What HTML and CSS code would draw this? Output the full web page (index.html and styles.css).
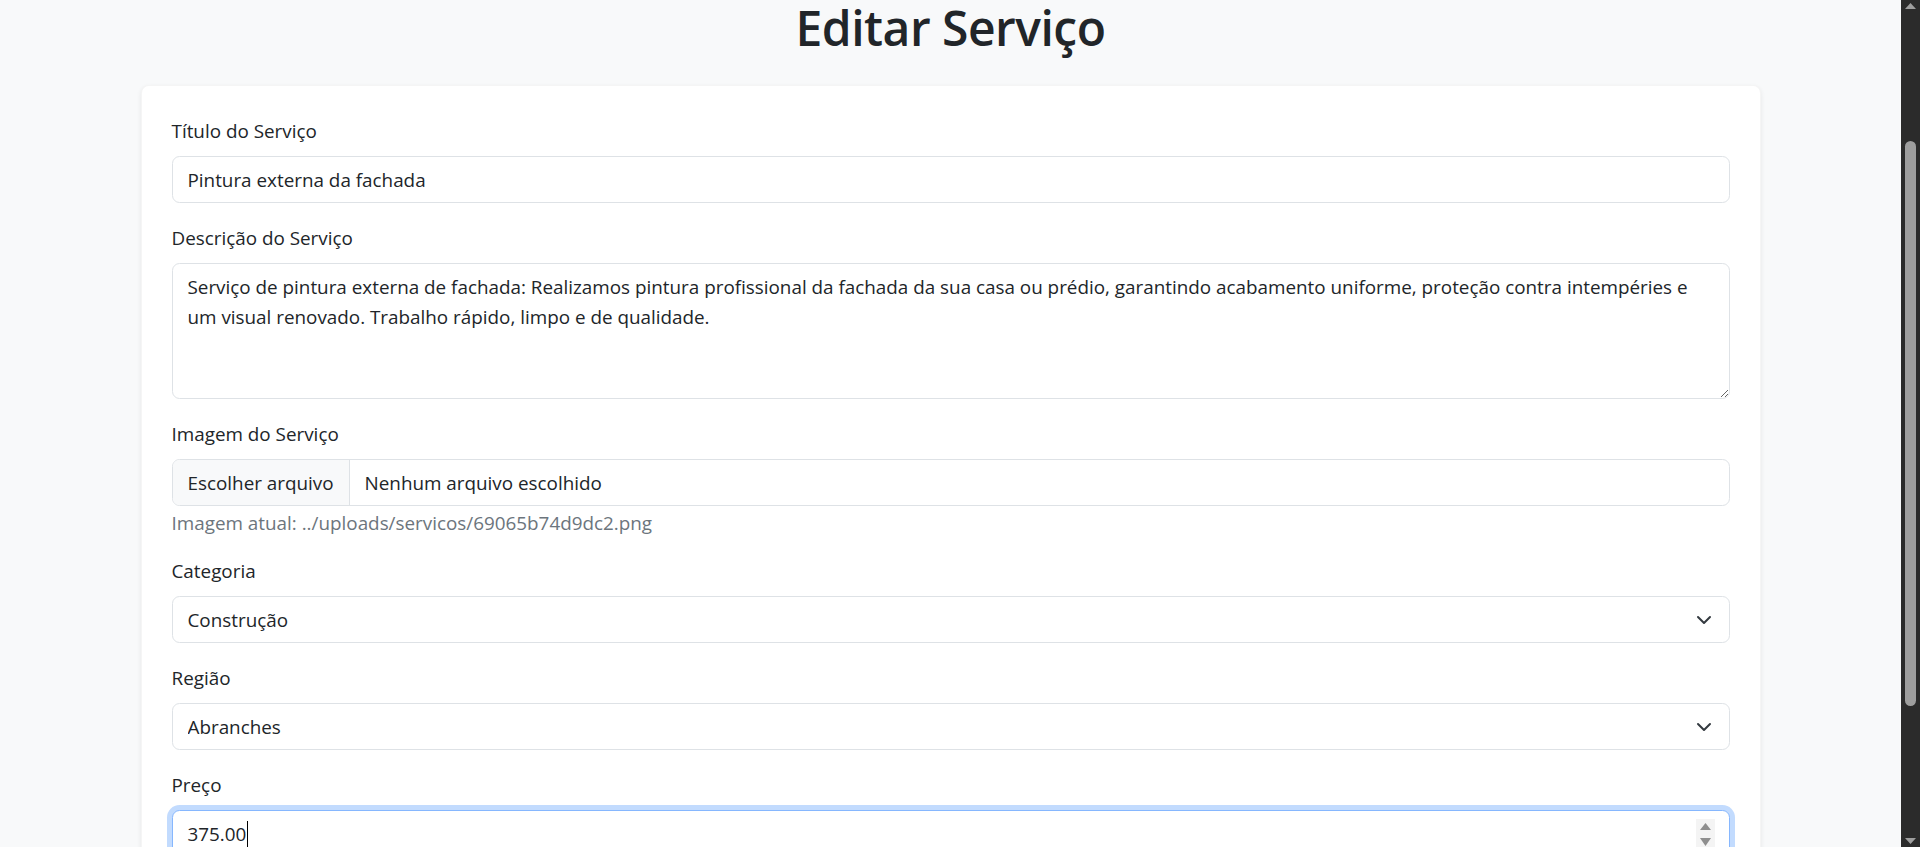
FILE: index.html
```html
<!DOCTYPE html>
<html lang="pt-BR">
<head>
<meta charset="utf-8">
<title>Editar Serviço</title>
<link rel="stylesheet" href="styles.css">
</head>
<body>
<div class="screen">
  <main class="viewport">
    <div class="container">
      <h1 class="page-title">Editar Serviço</h1>
      <form class="card">
        <div class="field">
          <label class="form-label" for="titulo">Título do Serviço</label>
          <input class="form-control" id="titulo" type="text" value="Pintura externa da fachada">
        </div>
        <div class="field">
          <label class="form-label" for="descricao">Descrição do Serviço</label>
          <textarea class="form-control textarea" id="descricao" rows="4">Serviço de pintura externa de fachada: Realizamos pintura profissional da fachada da sua casa ou prédio, garantindo acabamento uniforme, proteção contra intempéries e
um visual renovado. Trabalho rápido, limpo e de qualidade.</textarea>
        </div>
        <div class="field">
          <label class="form-label">Imagem do Serviço</label>
          <div class="form-control file-control">
            <span class="file-btn">Escolher arquivo</span>
            <span class="file-name">Nenhum arquivo escolhido</span>
          </div>
          <div class="form-text">Imagem atual: ../uploads/servicos/69065b74d9dc2.png</div>
        </div>
        <div class="field">
          <label class="form-label" for="categoria">Categoria</label>
          <div class="select-wrap">
            <select class="form-control form-select" id="categoria">
              <option>Construção</option>
            </select>
            <svg class="chevron" viewBox="0 0 16 16" width="16" height="16" aria-hidden="true"><path d="m2 5 6 6 6-6" fill="none" stroke="#343a40" stroke-width="2" stroke-linecap="round" stroke-linejoin="round"/></svg>
          </div>
        </div>
        <div class="field">
          <label class="form-label" for="regiao">Região</label>
          <div class="select-wrap">
            <select class="form-control form-select" id="regiao">
              <option>Abranches</option>
            </select>
            <svg class="chevron" viewBox="0 0 16 16" width="16" height="16" aria-hidden="true"><path d="m2 5 6 6 6-6" fill="none" stroke="#343a40" stroke-width="2" stroke-linecap="round" stroke-linejoin="round"/></svg>
          </div>
        </div>
        <div class="field">
          <label class="form-label">Preço</label>
          <div class="form-control price is-focused" role="textbox">
            <span class="price-value">375.00</span><span class="caret"></span>
            <span class="grow"></span>
            <svg class="spin" viewBox="0 0 19 30" width="19" height="30" aria-hidden="true">
              <rect width="19" height="30" fill="#f4f4f4"/>
              <polygon points="4,11 9.5,4 15,11" fill="#8f8f8f"/>
              <polygon points="4,19 9.5,27 15,19" fill="#8f8f8f"/>
            </svg>
          </div>
        </div>
      </form>
    </div>
  </main>
  <div class="scrollbar" aria-hidden="true">
    <svg class="sb-arrow" viewBox="0 0 19 14" width="19" height="14"><polygon points="4,9 9.5,3 15,9" fill="#9e9e9e"/></svg>
    <div class="sb-track"><div class="sb-thumb"></div></div>
    <svg class="sb-arrow" viewBox="0 0 19 14" width="19" height="14"><polygon points="4,5 9.5,11 15,5" fill="#9e9e9e"/></svg>
  </div>
</div>
</body>
</html>
```

FILE: styles.css
```css
html, body {
  margin: 0;
  padding: 0;
  height: 100%;
  overflow: hidden;
}

body {
  font-family: "Open Sans", "Noto Sans", sans-serif;
  font-size: 18.85px;
  line-height: 30px;
  color: #212529;
  background: #f8f9fa;
}

.screen {
  display: flex;
  height: 847px;
  overflow: hidden;
}

.viewport {
  flex: 1;
  min-width: 0;
  overflow: hidden;
  background: #f8f9fa;
}

.container {
  width: 1650px;
  box-sizing: border-box;
  margin: 0 auto;
  padding: 0 15px;
}

.page-title {
  margin: 0 0 30px;
  font-size: 48px;
  font-weight: 600;
  line-height: 55px;
  letter-spacing: -0.5px;
  text-align: center;
  color: #212529;
}

.card {
  display: flex;
  flex-direction: column;
  gap: 20px;
  background: #fff;
  border: 1px solid rgba(0, 0, 0, 0.04);
  border-radius: 8px;
  box-shadow: 0 2px 5px rgba(0, 0, 0, 0.075);
  padding: 30px;
}

.field {
  display: flex;
  flex-direction: column;
}

.form-label {
  display: block;
  line-height: 30px;
  margin-bottom: 10px;
}

.form-control {
  display: block;
  width: 100%;
  box-sizing: border-box;
  height: 47px;
  margin: 0;
  padding: 7.5px 15px;
  font-family: inherit;
  font-size: 18.85px;
  line-height: 30px;
  color: #212529;
  background: #fff;
  border: 1px solid #dee2e6;
  border-radius: 7.5px;
  outline: none;
}

.textarea {
  height: 136px;
  resize: vertical;
}

.file-control {
  display: flex;
  align-items: stretch;
  padding: 0;
  overflow: hidden;
}

.file-btn {
  display: flex;
  align-items: center;
  padding: 0 15px;
  background: #f8f9fa;
  border-right: 1px solid #dee2e6;
}

.file-name {
  display: flex;
  align-items: center;
  padding-left: 15px;
}

.form-text {
  margin-top: 4px;
  font-size: 18.85px;
  line-height: 26px;
  color: #6c757d;
}

.select-wrap {
  position: relative;
}

.form-select {
  appearance: none;
  -webkit-appearance: none;
  padding-right: 45px;
}

.chevron {
  position: absolute;
  right: 18px;
  top: 50%;
  margin-top: -8px;
  pointer-events: none;
}

.price {
  display: flex;
  align-items: center;
  padding-top: 7.5px;
  padding-bottom: 7.5px;
  padding-right: 14px;
  height: 47px;
}

.is-focused {
  border-color: #86b7fe;
  box-shadow: 0 0 0 5px rgba(13, 110, 253, 0.25);
}

.caret {
  display: inline-block;
  width: 1px;
  height: 26px;
  margin-left: 1px;
  background: #000;
}

.grow {
  flex: 1;
}

.spin {
  display: block;
}

.scrollbar {
  width: 19px;
  flex: none;
  display: flex;
  flex-direction: column;
  background: #2b2b2b;
}

.sb-arrow {
  display: block;
  flex: none;
}

.sb-track {
  flex: 1;
  padding-top: 127px;
  display: flex;
  justify-content: center;
}

.sb-thumb {
  width: 11px;
  height: 565px;
  border-radius: 6px;
  background: #9e9e9e;
}
```
